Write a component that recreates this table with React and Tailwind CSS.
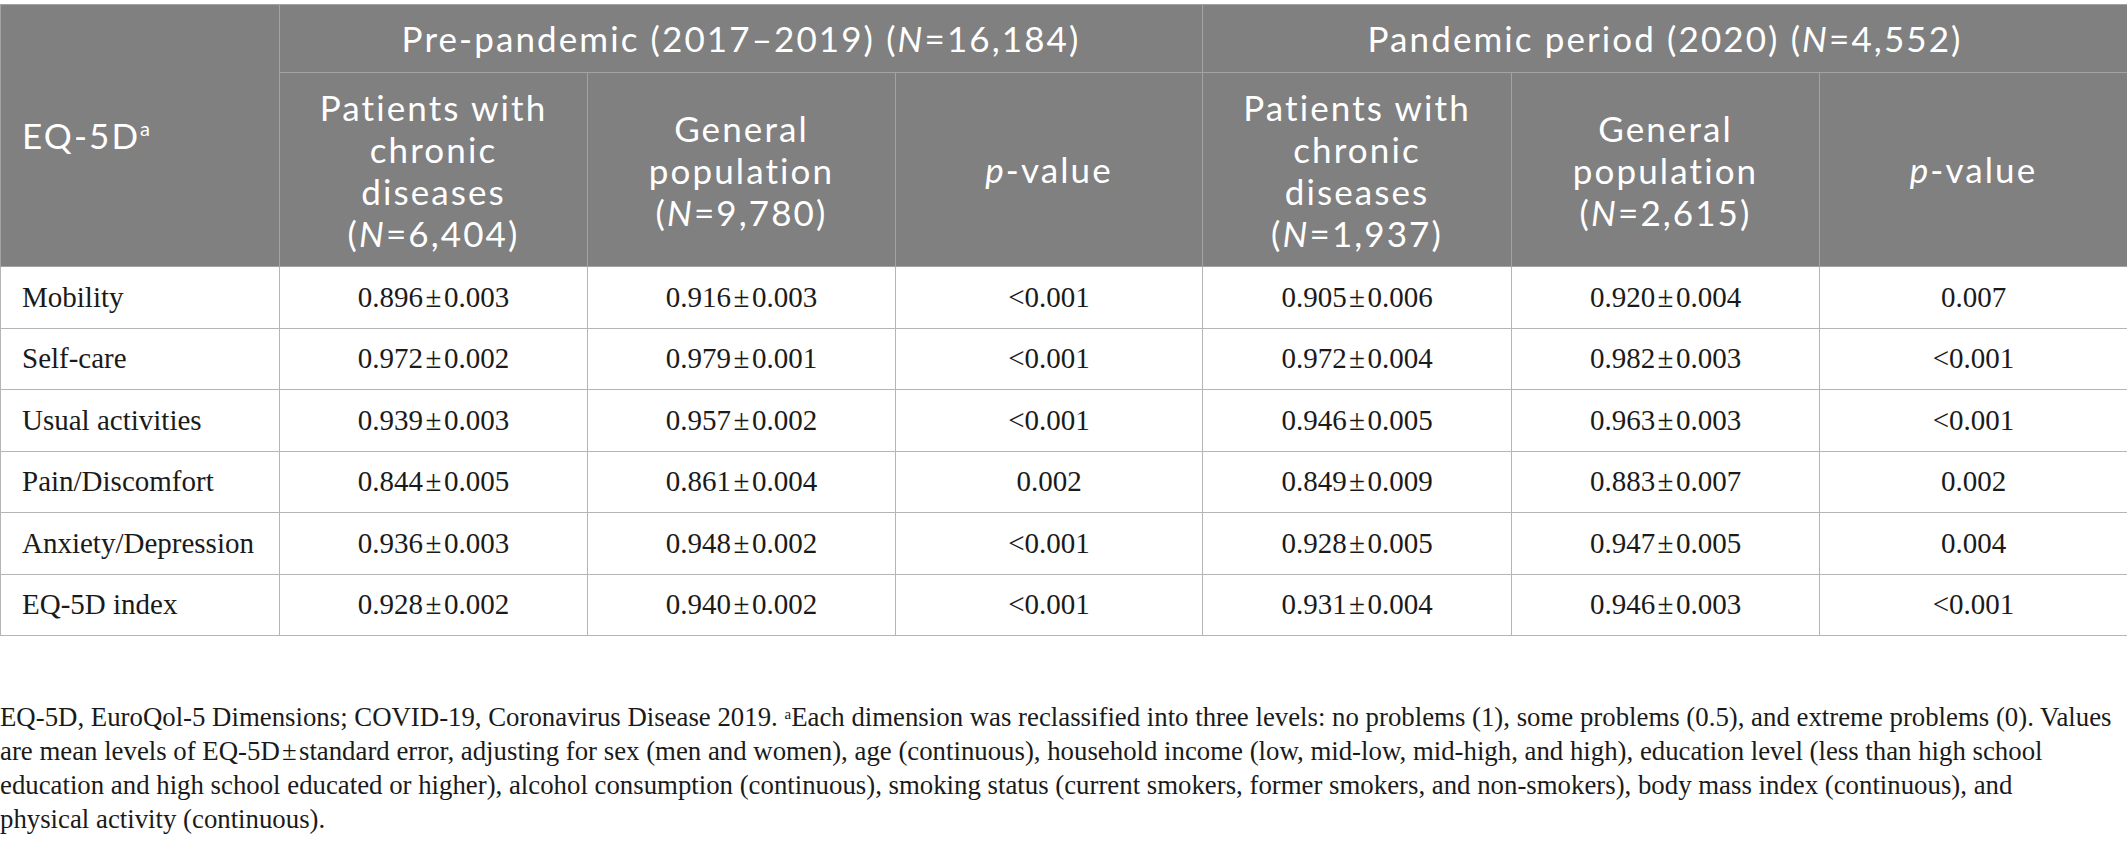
const sans = { fontFamily: 'Lato, "Open Sans", sans-serif' };

const rows = [
  ["Mobility", "0.896", "0.003", "0.916", "0.003", "<0.001", "0.905", "0.006", "0.920", "0.004", "0.007"],
  ["Self-care", "0.972", "0.002", "0.979", "0.001", "<0.001", "0.972", "0.004", "0.982", "0.003", "<0.001"],
  ["Usual activities", "0.939", "0.003", "0.957", "0.002", "<0.001", "0.946", "0.005", "0.963", "0.003", "<0.001"],
  ["Pain/Discomfort", "0.844", "0.005", "0.861", "0.004", "0.002", "0.849", "0.009", "0.883", "0.007", "0.002"],
  ["Anxiety/Depression", "0.936", "0.003", "0.948", "0.002", "<0.001", "0.928", "0.005", "0.947", "0.005", "0.004"],
  ["EQ-5D index", "0.928", "0.002", "0.940", "0.002", "<0.001", "0.931", "0.004", "0.946", "0.003", "<0.001"],
];

const MeanSe = ({ m, se }) => (
  <span>
    {m}
    {"\u200a±\u200a"}
    {se}
  </span>
);

const GroupHead = ({ lines, n }) => (
  <th className="border border-[#a3a3a3] px-1 text-center align-middle font-normal leading-[42px]">
    {lines.map((l) => (
      <div key={l} className="whitespace-nowrap">{l}</div>
    ))}
    <div className="whitespace-nowrap">
      (<i>N</i>={n})
    </div>
  </th>
);

const PHead = () => (
  <th className="border border-[#a3a3a3] px-2 text-center align-middle font-normal">
    <i>p</i>-value
  </th>
);

export default function App() {
  return (
    <div className="w-[2127px] bg-white pt-1" style={{ fontFamily: '"Liberation Serif", serif' }}>
      <table className="w-[2127px] table-fixed border-collapse">
        <colgroup>
          <col className="w-[279px]" />
          <col className="w-[308px]" />
          <col className="w-[308px]" />
          <col className="w-[307px]" />
          <col className="w-[309px]" />
          <col className="w-[308px]" />
          <col className="w-[308px]" />
        </colgroup>
        <thead className="bg-[#7f807f] text-white text-[35px] tracking-[0.06em]" style={sans}>
          <tr className="h-[68px]">
            <th rowSpan={2} className="border border-[#a3a3a3] pl-[21px] text-left align-middle font-normal">
              EQ-5D<sup className="text-[20px] -top-[13px]">a</sup>
            </th>
            <th colSpan={3} className="border border-[#a3a3a3] text-center font-normal">
              Pre-pandemic (2017–2019) (<i>N</i>=16,184)
            </th>
            <th colSpan={3} className="border border-[#a3a3a3] text-center font-normal">
              Pandemic period (2020) (<i>N</i>=4,552)
            </th>
          </tr>
          <tr className="h-[194px]">
            <GroupHead lines={["Patients with", "chronic", "diseases"]} n="6,404" />
            <GroupHead lines={["General", "population"]} n="9,780" />
            <PHead />
            <GroupHead lines={["Patients with", "chronic", "diseases"]} n="1,937" />
            <GroupHead lines={["General", "population"]} n="2,615" />
            <PHead />
          </tr>
        </thead>
        <tbody className="text-[29px] text-[#1a1a1a]">
          {rows.map((r) => (
            <tr key={r[0]} className="h-[61.5px]">
              <td className="border border-[#b5b5b5] pl-[21px]">{r[0]}</td>
              <td className="border border-[#b5b5b5] text-center"><MeanSe m={r[1]} se={r[2]} /></td>
              <td className="border border-[#b5b5b5] text-center"><MeanSe m={r[3]} se={r[4]} /></td>
              <td className="border border-[#b5b5b5] text-center">{r[5]}</td>
              <td className="border border-[#b5b5b5] text-center"><MeanSe m={r[6]} se={r[7]} /></td>
              <td className="border border-[#b5b5b5] text-center"><MeanSe m={r[8]} se={r[9]} /></td>
              <td className="border border-[#b5b5b5] text-center">{r[10]}</td>
            </tr>
          ))}
        </tbody>
      </table>

      <div className="mt-[64px] text-[26.8px] leading-[34px] text-[#1a1a1a]">
        <div className="whitespace-nowrap">
          EQ-5D, EuroQol-5 Dimensions; COVID-19, Coronavirus Disease 2019. <sup className="text-[15px]">a</sup>Each dimension was reclassified into three levels: no problems (1), some problems (0.5), and extreme problems (0). Values
        </div>
        <div className="whitespace-nowrap">
          are mean levels of EQ-5D{"\u200a±\u200a"}standard error, adjusting for sex (men and women), age (continuous), household income (low, mid-low, mid-high, and high), education level (less than high school
        </div>
        <div className="whitespace-nowrap">
          education and high school educated or higher), alcohol consumption (continuous), smoking status (current smokers, former smokers, and non-smokers), body mass index (continuous), and
        </div>
        <div className="whitespace-nowrap">physical activity (continuous).</div>
      </div>
    </div>
  );
}
